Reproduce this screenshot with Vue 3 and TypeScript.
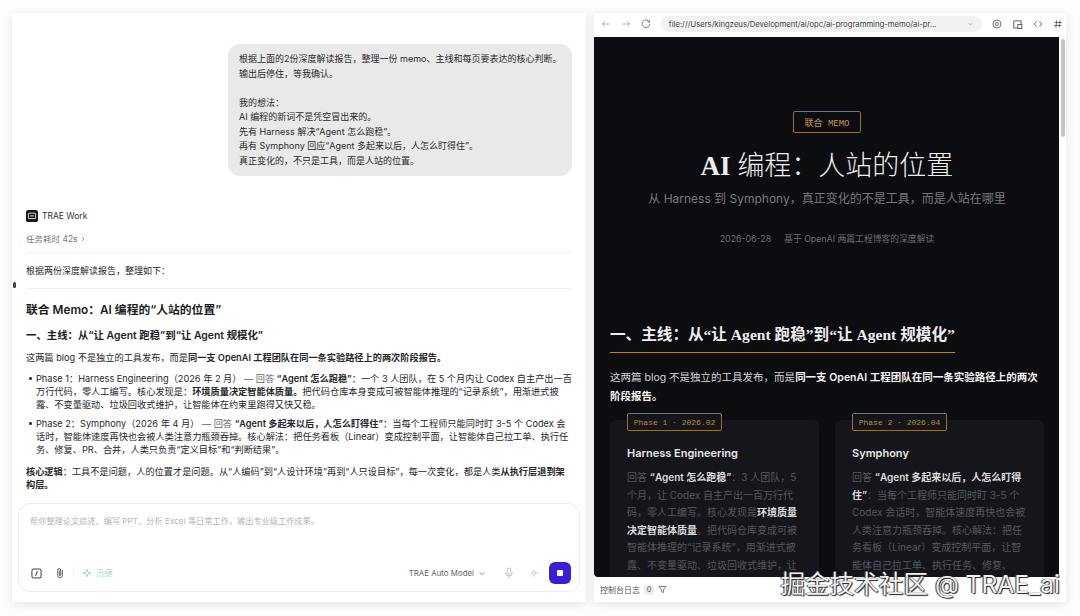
<template>
  <div class="page">
    <section class="chat">
      <span class="edge-dot" />
      <div class="chat-scroll">
        <div class="bubble">
          <p>根据上面的2份深度解读报告，整理一份 memo、主线和每页要表达的核心判断。</p>
          <p>输出后停住，等我确认。</p>
          <p class="blank">&nbsp;</p>
          <p>我的想法：</p>
          <p>AI 编程的新词不是凭空冒出来的。</p>
          <p>先有 Harness 解决“Agent 怎么跑稳”。</p>
          <p>再有 Symphony 回应“Agent 多起来以后，人怎么盯得住”。</p>
          <p>真正变化的，不只是工具，而是人站的位置。</p>
        </div>

        <div class="agent">
          <svg class="agent-logo" viewBox="0 0 12 12" width="12" height="12">
            <rect width="12" height="12" rx="2.6" fill="#17181a" />
            <rect x="2.4" y="3.2" width="7.2" height="5.4" rx="0.6" fill="none" stroke="#e8e8e8" stroke-width="0.9" />
            <path d="M4 5.9h4" stroke="#e8e8e8" stroke-width="0.9" />
          </svg>
          <span>TRAE Work</span>
        </div>
        <div class="elapsed">
          任务耗时 42s
          <svg viewBox="0 0 6 8" width="4" height="6"><path d="M1.5 1l3 3-3 3" fill="none" stroke="#777" stroke-width="1" /></svg>
        </div>
        <p class="intro">根据两份深度解读报告，整理如下：</p>

        <h1>联合 Memo：AI 编程的“人站的位置”</h1>
        <h2>一、主线：从“让 Agent 跑稳”到“让 Agent 规模化”</h2>
        <p class="para">这两篇 blog 不是独立的工具发布，而是<b>同一支 OpenAI 工程团队在同一条实验路径上的两次阶段报告。</b></p>
        <ul>
          <li v-for="item in phases" :key="item.head">
            {{ item.head }} <span class="muted">— 回答</span> <b>“{{ item.question }}”</b>：<span v-html="item.body" />
          </li>
        </ul>
        <p class="para core"><b>核心逻辑</b>：工具不是问题，人的位置才是问题。从“人编码”到“人设计环境”再到“人只设目标”，每一次变化，都是人类<b>从执行层退到架构层。</b></p>
      </div>

      <div class="composer">
        <p class="placeholder">帮你整理论文综述、编写 PPT、分析 Excel 等日常工作，输出专业级工作成果。</p>
        <div class="composer-bar">
          <svg viewBox="0 0 12 12" width="11" height="11">
            <rect x="1" y="1" width="10" height="10" rx="2" fill="none" stroke="#444" stroke-width="1.1" />
            <path d="M7 3.6 5 8.4" stroke="#444" stroke-width="1.1" />
          </svg>
          <svg class="clip" viewBox="0 0 12 14" width="10" height="12">
            <path d="M8.8 4v6a2.8 2.8 0 0 1-5.6 0V3.6a1.8 1.8 0 0 1 3.6 0v6a.8.8 0 0 1-1.6 0V4.5" fill="none" stroke="#555" stroke-width="1.1" stroke-linecap="round" />
          </svg>
          <span class="divider" />
          <span class="fast">
            <svg viewBox="0 0 12 12" width="10" height="10">
              <path d="M6 1.2 7.2 4.8 10.8 6 7.2 7.2 6 10.8 4.8 7.2 1.2 6 4.8 4.8z" fill="none" stroke="#9fdcc3" stroke-width="1.1" stroke-linejoin="round" />
            </svg>
            迅捷
          </span>
          <span class="spacer" />
          <span class="model">TRAE Auto Model</span>
          <svg class="model-arrow" viewBox="0 0 8 6" width="6" height="5"><path d="M1 1.5l3 3 3-3" fill="none" stroke="#666" stroke-width="1" /></svg>
          <svg class="mic" viewBox="0 0 12 14" width="10" height="12">
            <rect x="3.8" y="1" width="4.4" height="7.4" rx="2.2" fill="none" stroke="#b4b4b4" stroke-width="1" />
            <path d="M2 6.6a4 4 0 0 0 8 0M6 10.8v2" fill="none" stroke="#b4b4b4" stroke-width="1" />
          </svg>
          <svg class="wave" viewBox="0 0 12 12" width="10" height="10">
            <path d="M1 6h1.6M4 3.6v4.8M6 1.6v8.8M8 4v4M9.5 5.2 11 6 9.5 6.8" fill="none" stroke="#c4c4c4" stroke-width="0.9" />
          </svg>
          <button type="button" class="stop"><i /></button>
        </div>
      </div>
    </section>

    <section class="browser">
      <div class="toolbar">
        <svg viewBox="0 0 12 12" width="10" height="10"><path d="M10.5 6h-9M5 2.5 1.5 6 5 9.5" fill="none" stroke="#a8a8a8" stroke-width="1" /></svg>
        <svg viewBox="0 0 12 12" width="10" height="10"><path d="M1.5 6h9M7 2.5 10.5 6 7 9.5" fill="none" stroke="#a8a8a8" stroke-width="1" /></svg>
        <svg viewBox="0 0 12 12" width="10" height="10"><path d="M10 3.4A4.6 4.6 0 1 0 10.6 6M10.2 1.2v2.6H7.6" fill="none" stroke="#666" stroke-width="1" /></svg>
        <div class="address">
          <span>file:///Users/kingzeus/Development/ai/opc/ai-programming-memo/ai-pr...</span>
          <svg viewBox="0 0 8 6" width="5" height="4"><path d="M1 1.5l3 3 3-3" fill="none" stroke="#999" stroke-width="1" /></svg>
        </div>
        <svg viewBox="0 0 12 12" width="10" height="10">
          <circle cx="6" cy="6" r="4.8" fill="none" stroke="#555" stroke-width="1" />
          <circle cx="6" cy="6" r="1.9" fill="none" stroke="#555" stroke-width="1" />
        </svg>
        <svg viewBox="0 0 12 12" width="11" height="11">
          <path d="M2 9V2h8v7M1 9.8h6" fill="none" stroke="#555" stroke-width="1" />
          <rect x="6.4" y="6" width="4.4" height="4.4" fill="#fff" stroke="#555" stroke-width="1" />
        </svg>
        <svg viewBox="0 0 12 12" width="10" height="10"><path d="M4 3 1.5 6 4 9M8 3l2.5 3L8 9" fill="none" stroke="#555" stroke-width="1" /></svg>
        <svg viewBox="0 0 12 12" width="10" height="10"><path d="M4.6 1.5 3.4 10.5M8.6 1.5 7.4 10.5M1.8 4.2h8.8M1.4 7.8h8.8" fill="none" stroke="#555" stroke-width="1" /></svg>
      </div>

      <div class="viewport">
        <div class="doc">
          <header class="hero">
            <span class="hero-tag">联合 MEMO</span>
            <div class="hero-title"><b>AI</b> 编程：人站的位置</div>
            <div class="hero-sub">从 Harness 到 Symphony，真正变化的不是工具，而是人站在哪里</div>
            <div class="hero-meta"><span>2026-06-28</span><span>基于 OpenAI 两篇工程博客的深度解读</span></div>
          </header>

          <h3><span>一、主线：从“让 Agent 跑稳”到“让 Agent 规模化”</span></h3>
          <p class="lead">这两篇 blog 不是独立的工具发布，而是<b>同一支 OpenAI 工程团队在同一条实验路径上的两次阶段报告。</b></p>

          <div class="cards">
            <article class="card">
              <span class="card-tag">Phase 1 · 2026.02</span>
              <div class="card-title">Harness Engineering</div>
              <p>回答 <b>“Agent 怎么跑稳”</b>：3 人团队，5 个月，让 Codex 自主产出一百万行代码，零人工编写。核心发现是<b>环境质量决定智能体质量</b>。把代码仓库变成可被智能体推理的“记录系统”，用渐进式披露、不变量驱动、垃圾回收式维护，让智能体在约束里跑得又快又稳。</p>
            </article>
            <article class="card">
              <span class="card-tag">Phase 2 · 2026.04</span>
              <div class="card-title">Symphony</div>
              <p>回答 <b>“Agent 多起来以后，人怎么盯得住”</b>：当每个工程师只能同时盯 3-5 个 Codex 会话时，智能体速度再快也会被人类注意力瓶颈吞掉。核心解法：把任务看板（Linear）变成控制平面，让智能体自己拉工单、执行任务、修复、PR、合并。</p>
            </article>
          </div>
        </div>
        <div class="scrollbar"><i /></div>
      </div>

      <div class="console">
        <span>控制台日志</span>
        <em>0</em>
        <svg viewBox="0 0 12 12" width="9" height="9"><path d="M1.2 1.8h9.6L7.2 6.4v3.8l-2.4-1V6.4z" fill="none" stroke="#555" stroke-width="1" /></svg>
      </div>
      <div class="watermark">掘金技术社区 @ TRAE_ai</div>
    </section>
  </div>
</template>

<script setup lang="ts">
interface PhaseItem {
  head: string;
  question: string;
  body: string;
}

const phases: PhaseItem[] = [
  {
    head: 'Phase 1：Harness Engineering（2026 年 2 月）',
    question: 'Agent 怎么跑稳',
    body: '一个 3 人团队，在 5 个月内让 Codex 自主产出一百万行代码，零人工编写。核心发现是：<b style="font-weight:600">环境质量决定智能体质量。</b>把代码仓库本身变成可被智能体推理的“记录系统”，用渐进式披露、不变量驱动、垃圾回收式维护，让智能体在约束里跑得又快又稳。',
  },
  {
    head: 'Phase 2：Symphony（2026 年 4 月）',
    question: 'Agent 多起来以后，人怎么盯得住',
    body: '当每个工程师只能同时盯 3-5 个 Codex 会话时，智能体速度再快也会被人类注意力瓶颈吞掉。核心解法：把任务看板（Linear）变成控制平面，让智能体自己拉工单、执行任务、修复、PR、合并，人类只负责“定义目标”和“判断结果”。',
  },
];
</script>

<style>
html,
body {
  margin: 0;
  background: #fdfdfd;
}
</style>

<style scoped>
.page {
  width: 1080px;
  height: 616px;
  box-sizing: border-box;
  padding: 13px 14px 14px 12px;
  display: flex;
  gap: 8px;
  overflow: hidden;
  font-family: Inter, "Noto Sans CJK SC", sans-serif;
  color: #26272b;
}

p,
h1,
h2,
h3,
ul {
  margin: 0;
  padding: 0;
}

/* left panel */
.chat {
  position: relative;
  width: 574px;
  flex: none;
  display: flex;
  flex-direction: column;
  background: #fff;
  box-shadow: 0 2px 10px rgba(0, 0, 0, 0.1);
  font-size: 9px;
  line-height: 14.5px;
}

.edge-dot {
  position: absolute;
  left: 1px;
  top: 269px;
  width: 3px;
  height: 6px;
  border-radius: 2px;
  background: #444;
}

.chat-scroll {
  flex: 1;
  min-height: 0;
  overflow: hidden;
  padding: 31px 14px 0 14px;
}

.bubble {
  width: 344px;
  box-sizing: border-box;
  margin-left: auto;
  margin-right: 0;
  padding: 8px 11px 8px;
  background: #e9e9e9;
  border-radius: 12px;
  color: #2a2a2a;
  white-space: nowrap;
}

.agent {
  margin-top: 33px;
  display: flex;
  align-items: center;
  gap: 4px;
  font-size: 8.5px;
  color: #333;
}

.agent-logo {
  flex: none;
}

.elapsed {
  margin-top: 8px;
  padding-bottom: 6px;
  border-bottom: 1px solid #f1f1f1;
  display: flex;
  align-items: center;
  gap: 3px;
  font-size: 8.5px;
  color: #777;
}

.intro {
  padding: 11px 0 9px;
  border-bottom: 1px solid #f1f1f1;
}

h1 {
  margin-top: 12px;
  font-size: 11.8px;
  line-height: 18px;
  font-weight: 600;
  color: #1d1d1f;
}

h2 {
  margin-top: 9px;
  font-size: 10.4px;
  line-height: 15px;
  font-weight: 600;
  color: #1d1d1f;
}

.para {
  margin-top: 8px;
  font-size: 9.2px;
  line-height: 13.3px;
}

b {
  font-weight: 600;
}

.muted {
  color: #666;
}

ul {
  list-style: none;
  margin-top: 8px;
}

li {
  position: relative;
  padding-left: 10px;
  margin-bottom: 5px;
  font-size: 9.2px;
  line-height: 13.3px;
}

li:last-child {
  margin-bottom: 0;
}

li::before {
  content: "";
  position: absolute;
  left: 3px;
  top: 5.4px;
  width: 2.5px;
  height: 2.5px;
  border-radius: 50%;
  background: #333;
}

.composer {
  flex: none;
  margin: 0 6px 10px;
  height: 89px;
  box-sizing: border-box;
  padding: 10px 8px 7px 11px;
  border: 1px solid #ececec;
  border-radius: 12px;
  display: flex;
  flex-direction: column;
  justify-content: space-between;
  background: #fff;
}

.placeholder {
  font-size: 8.2px;
  color: #b5b5b5;
}

.composer-bar {
  display: flex;
  align-items: center;
  height: 22px;
  padding-left: 1px;
}

.clip {
  margin-left: 13px;
}

.divider {
  width: 1px;
  height: 8px;
  margin: 0 8px 0 8px;
  background: #eee;
}

.fast {
  display: flex;
  align-items: center;
  gap: 4px;
  font-size: 8.2px;
  color: #a6dfc8;
}

.spacer {
  flex: 1;
}

.model {
  font-size: 7.9px;
  color: #666;
}

.model-arrow {
  margin-left: 5px;
}

.mic {
  margin-left: 19px;
}

.wave {
  margin-left: 15px;
}

.stop {
  margin-left: 10px;
  width: 22px;
  height: 22px;
  padding: 0;
  border: 0;
  border-radius: 6px;
  background: #3a1fd6;
  display: flex;
  align-items: center;
  justify-content: center;
}

.stop i {
  width: 6px;
  height: 6px;
  border-radius: 1px;
  background: #fff;
}

/* right panel */
.browser {
  position: relative;
  width: 472px;
  flex: none;
  display: flex;
  flex-direction: column;
  background: #fff;
  box-shadow: 0 2px 10px rgba(0, 0, 0, 0.1);
}

.toolbar {
  flex: none;
  height: 24px;
  display: flex;
  align-items: center;
  padding: 0 3px 2px 7px;
  box-sizing: border-box;
  gap: 10px;
}

.address {
  width: 323px;
  height: 16px;
  padding: 0 9px 0 8px;
  box-sizing: border-box;
  border-radius: 8px;
  background: #f0f1f2;
  display: flex;
  align-items: center;
  justify-content: space-between;
  font-size: 7.7px;
  color: #444;
  white-space: nowrap;
}

.viewport {
  flex: none;
  height: 540px;
  display: flex;
  overflow: hidden;
}

.doc {
  width: 465px;
  flex: none;
  box-sizing: border-box;
  padding: 0 15px 0 16px;
  background: #0c0d10;
  border-radius: 0 0 4px 4px;
  overflow: hidden;
  color: #e7e7e7;
}

.scrollbar {
  flex: 1;
  padding: 2px 1px 0 2px;
}

.scrollbar i {
  display: block;
  height: 98px;
  border-radius: 3px;
  background: #c6c6c6;
}

.hero {
  display: flex;
  flex-direction: column;
  align-items: center;
  padding-top: 74px;
}

.hero-tag {
  box-sizing: border-box;
  height: 22px;
  width: 68px;
  border: 1px solid #96703a;
  border-radius: 2px;
  display: flex;
  align-items: center;
  justify-content: center;
  font-family: "Liberation Mono", "Noto Sans CJK SC", monospace;
  font-size: 9px;
  color: #c79a4f;
  white-space: pre;
}

.hero-title {
  margin-top: 17px;
  font-family: "Liberation Serif", "Noto Sans CJK SC", serif;
  font-size: 27px;
  line-height: 32px;
  color: #eeeeee;
  font-weight: 300;
}

.hero-sub {
  margin-top: 8px;
  font-size: 12px;
  line-height: 18px;
  color: #77797e;
}

.hero-meta {
  margin-top: 24px;
  display: flex;
  gap: 13px;
  font-size: 8.8px;
  line-height: 14px;
  color: #6a6c70;
}

h3 {
  margin-top: 77px;
  font-family: "Liberation Serif", "Noto Sans CJK SC", serif;
  font-size: 15.6px;
  line-height: 24px;
  font-weight: 600;
  color: #eeeeee;
}

h3 span {
  display: inline-block;
  padding-bottom: 5px;
  border-bottom: 1px solid #b0843f;
  white-space: nowrap;
}

.lead {
  margin-top: 16px;
  font-size: 10.5px;
  line-height: 18.5px;
  color: #d6d6d6;
}

.lead b {
  color: #f3f3f3;
}

.cards {
  margin-top: 14px;
  display: grid;
  grid-template-columns: 209px 209px;
  gap: 16px;
}

.card {
  position: relative;
  box-sizing: border-box;
  height: 240px;
  padding: 24px 16px 0 17px;
  background: #14161b;
  border-radius: 6px;
}

.card-tag {
  position: absolute;
  left: 17px;
  top: -7px;
  box-sizing: border-box;
  width: 95px;
  height: 18px;
  display: flex;
  align-items: center;
  justify-content: center;
  border: 1px solid #96703a;
  border-radius: 2px;
  background: #14161b;
  font-family: "Liberation Mono", monospace;
  font-size: 8px;
  color: #b48a45;
  white-space: nowrap;
}

.card-title {
  font-size: 11px;
  line-height: 18px;
  font-weight: 600;
  color: #e6e6e6;
}

.card p {
  margin-top: 7px;
  font-size: 10px;
  line-height: 17.5px;
  color: #55585e;
}

.card b {
  color: #dcdcdc;
}

.console {
  flex: 1;
  display: flex;
  align-items: center;
  gap: 4px;
  padding-left: 6px;
  font-size: 8px;
  color: #555;
}

.console em {
  font-style: normal;
  font-size: 7.5px;
  width: 10px;
  height: 10px;
  line-height: 10px;
  text-align: center;
  background: #eee;
  border-radius: 2px;
}

.watermark {
  position: absolute;
  right: 6px;
  bottom: 3px;
  font-size: 24.6px;
  line-height: 30px;
  color: #f0f0f0;
  white-space: nowrap;
  text-shadow: 0 0 1px #222, 1px 1px 1px #222, -1px 0 1px #444;
}
</style>
